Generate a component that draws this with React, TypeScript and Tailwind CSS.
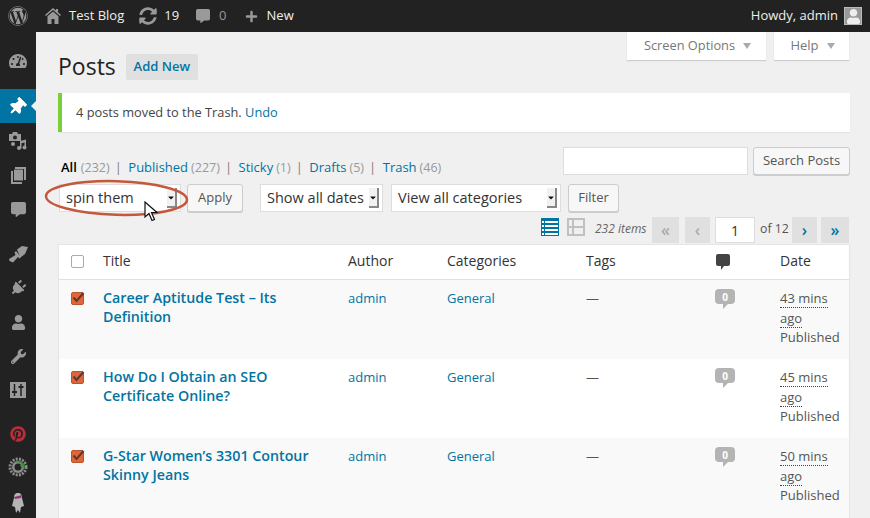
import { FaWordpress, FaSyncAlt, FaCommentAlt, FaPlus, FaTachometerAlt, FaThumbtack, FaPlug, FaUser, FaWrench, FaPinterest, FaCaretDown } from "react-icons/fa"

const posts = [
  { id: 1, title: ["Career Aptitude Test – Its", "Definition"], mins: "43 mins", bg: "bg-[#f9f9f9]" },
  { id: 2, title: ["How Do I Obtain an SEO", "Certificate Online?"], mins: "45 mins", bg: "bg-white" },
  { id: 3, title: ["G-Star Women’s 3301 Contour", "Skinny Jeans"], mins: "50 mins", bg: "bg-[#f9f9f9]" },
]

const filters = [
  { label: "Published", count: "(227)" },
  { label: "Sticky", count: "(1)" },
  { label: "Drafts", count: "(5)" },
  { label: "Trash", count: "(46)" },
]

function HomeIcon() {
  return (
    <svg width="16" height="16" viewBox="0 0 16 16" fill="#999">
      <path d="M8 0l3 2.600V1h2v3.300l3 2.700-1 1.100L8 2 1 8.100 0 7z" />
      <path d="M8 3.500l5.500 4.800V16H9.500v-5h-3v5h-4V8.300z" />
    </svg>
  )
}

function MediaIcon() {
  return (
    <svg width="20" height="20" viewBox="0 0 20 20" fill="#9a9a9a">
      <path d="M1 3h3l1-2h4l1 2h3v7H1z" />
      <circle cx="7" cy="6.500" r="2" fill="#222" />
      <path d="M12 10l6-1.500v8h-1.500v-5l-3 .8v5.200H12z" />
      <circle cx="11" cy="17" r="2" />
      <circle cx="16.500" cy="16.500" r="2" />
      <circle cx="5" cy="13" r="2" />
    </svg>
  )
}

function PagesIcon() {
  return (
    <svg width="15" height="17" viewBox="0 0 15 17" fill="#9a9a9a">
      <path d="M4 0h11v13h-2V2H4z" />
      <path d="M3 2.500h9v11H3z" />
      <path d="M0 4h2v11h9v2H0z" />
    </svg>
  )
}

function BrushIcon() {
  return (
    <svg width="19" height="17" viewBox="0 0 19 17" fill="#9a9a9a">
      <path d="M8 3.500L13 0l6 1-3 7-4.500 3.500z" />
      <path d="M7 5l5 6-1.500 1.500L9 11l-5 5.500-3.500-1.500-.5-2L6.500 9 5.500 6.500z" />
    </svg>
  )
}

function SettingsIcon() {
  return (
    <svg width="16" height="16" viewBox="0 0 16 16">
      <rect width="16" height="16" fill="#9a9a9a" />
      <path d="M4.500 2v12M11 2v12" stroke="#222" strokeWidth="1.500" />
      <path d="M2 10h5M8.500 5h5" stroke="#222" strokeWidth="2" />
    </svg>
  )
}

function GearIcon() {
  return (
    <svg width="20" height="20" viewBox="0 0 20 20">
      <circle cx="10" cy="10" r="8" fill="none" stroke="#8c8c8c" strokeWidth="3" strokeDasharray="2 1.200" />
      <circle cx="10" cy="10" r="6" fill="#8c8c8c" />
      <circle cx="10" cy="10" r="3.500" fill="#222" />
      <path d="M7 5.500c3-2.500 7-1.500 8 2l2-.5-2 4-3.500-2.500 2-.5c-1-2-4-3-6.500-2.500z" fill="#2f9e2f" />
    </svg>
  )
}

function NinjaIcon() {
  return (
    <svg width="16" height="22" viewBox="0 0 16 22">
      <path d="M8 1c3 0 4 2 4 5l2 8-3 1-1 6-2-3-2 3-1-6-3-1 2-8c0-3 1-5 4-5z" fill="#b5b5b5" />
      <path d="M4 5l8-2-1 3-6 1z" fill="#8a3a6a" />
    </svg>
  )
}

function SelectBox({ label, width }: { label: string; width: string }) {
  return (
    <div className={`${width} h-[28px] bg-white border border-[#ddd] flex items-center justify-between pl-[6px] pr-[3px] text-[14.500px] text-[#333]`}>
      <span>{label}</span>
      <span className="w-[10px] h-[20px] flex items-center justify-center bg-[#f1f1f1] border-r-2 border-b-2 border-[#888]">
        <FaCaretDown size={9} color="#111" />
      </span>
    </div>
  )
}

function Button({ label, width }: { label: string; width: string }) {
  return (
    <div className={`${width} h-[28px] bg-[#f7f7f7] border border-[#ccc] rounded-[3px] shadow-[0_1px_0_#ccc] flex items-center justify-center text-[13px] text-[#555]`}>
      {label}
    </div>
  )
}

function PageButton({ label, dim, width }: { label: string; dim?: boolean; width: string }) {
  return (
    <div className={`${width} h-[26px] bg-[#e0e0e0] flex items-center justify-center text-[16px] font-semibold ${dim ? "text-[#aaa]" : "text-[#0074a2]"}`}>
      {label}
    </div>
  )
}

export default function App() {
  return (
    <div className="w-[870px] h-[518px] overflow-hidden flex flex-col bg-[#f0f0f0] text-[13px] text-[#444] font-['Open_Sans',sans-serif]">
      {/* ADMIN BAR */}
      <div className="h-[32px] shrink-0 bg-[#222] flex items-center text-[13px] text-[#eee]">
        <div className="w-[36px] flex justify-center text-[#999]">
          <FaWordpress size={20} />
        </div>
        <div className="ml-[9px] flex items-center gap-[8px]">
          <HomeIcon />
          <span>Test Blog</span>
        </div>
        <div className="ml-[15px] flex items-center gap-[7px]">
          <FaSyncAlt size={18} color="#999" />
          <span>19</span>
        </div>
        <div className="ml-[17px] flex items-center gap-[9px]">
          <FaCommentAlt size={14} color="#999" />
          <span className="text-[#999]">0</span>
        </div>
        <div className="ml-[18px] flex items-center gap-[9px]">
          <FaPlus size={13} color="#999" />
          <span>New</span>
        </div>
        <div className="ml-auto mr-[8px] flex items-center gap-[6px]">
          <span>Howdy, admin</span>
          <div className="w-[18px] h-[18px] bg-[#999] border border-[#bbb] flex items-end justify-center overflow-hidden">
            <FaUser size={15} color="#eee" />
          </div>
        </div>
      </div>

      <div className="flex flex-1 min-h-0">
        {/* SIDEBAR */}
        <div className="w-[36px] shrink-0 bg-[#222] flex flex-col items-center text-[#999]">
          <div className="h-[57px] shrink-0 w-full flex items-center justify-center">
            <FaTachometerAlt size={18} />
          </div>
          <div className="h-[34px] shrink-0 w-full bg-[#0074a2] flex items-center justify-center text-white relative pt-[2px] pr-[2px]">
            <FaThumbtack size={18} className="rotate-45" />
            <span className="absolute right-0 top-[12px] border-y-[5px] border-y-transparent border-r-[5px] border-r-[#f0f0f0]" />
          </div>
          <div className="h-[34px] shrink-0 w-full pt-[2px] flex items-center justify-center"><MediaIcon /></div>
          <div className="h-[34px] shrink-0 w-full pt-[2px] flex items-center justify-center"><PagesIcon /></div>
          <div className="h-[34px] shrink-0 w-full pt-[2px] flex items-center justify-center"><FaCommentAlt size={15} /></div>
          <div className="h-[34px] shrink-0 mt-[12px] w-full flex items-center justify-center"><BrushIcon /></div>
          <div className="h-[34px] shrink-0 w-full flex items-center justify-center"><FaPlug size={16} className="rotate-45" /></div>
          <div className="h-[34px] shrink-0 w-full flex items-center justify-center"><FaUser size={15} /></div>
          <div className="h-[34px] shrink-0 w-full flex items-center justify-center"><FaWrench size={15} /></div>
          <div className="h-[34px] shrink-0 w-full flex items-center justify-center"><SettingsIcon /></div>
          <div className="h-[34px] shrink-0 mt-[10px] w-full flex items-center justify-center text-[#b5303a]"><FaPinterest size={16} /></div>
          <div className="h-[32px] shrink-0 w-full flex items-center justify-center"><GearIcon /></div>
          <div className="h-[40px] shrink-0 w-full flex items-center justify-center"><NinjaIcon /></div>
        </div>

        {/* CONTENT */}
        <div className="flex-1 min-w-0 pl-[22px] pr-[20px] relative">
          {/* tabs */}
          <div className="flex justify-end gap-[8px] pr-[1px] h-[28px] text-[#777]">
            <div className="w-[139px] h-[28px] pl-[2px] bg-white shadow-[0_1px_1px_rgba(0,0,0,0.15)] flex items-center justify-center gap-[8px] text-[12.800px]">
              Screen Options <span className="border-x-[4px] border-x-transparent border-t-[6px] border-t-[#aaa]" />
            </div>
            <div className="w-[75px] h-[28px] pl-[2px] bg-white shadow-[0_1px_1px_rgba(0,0,0,0.15)] flex items-center justify-center gap-[8px]">
              Help <span className="border-x-[4px] border-x-transparent border-t-[6px] border-t-[#aaa]" />
            </div>
          </div>

          {/* title */}
          <div className="-mt-[6px] h-[26px] flex items-center">
            <h1 className="text-[23px] text-[#222] leading-[26px] -mt-[2px]">Posts</h1>
            <div className="ml-[10px] w-[72px] h-[26px] bg-[#e0e0e0] rounded-[2px] flex items-center justify-center text-[13px] font-semibold text-[#0074a2]">
              Add New
            </div>
          </div>

          {/* notice */}
          <div className="mt-[13px] h-[39px] bg-white border-l-4 border-[#7ad03a] shadow-[0_1px_1px_rgba(0,0,0,0.05)] flex items-center pl-[14px] text-[12.800px]">
            4 posts moved to the Trash.&nbsp;<span className="text-[#0074a2]">Undo</span>
          </div>

          {/* filters + search */}
          <div className="mt-[15px] h-[28px] flex items-start justify-between">
            <div className="flex items-center h-[18px] mt-[12px] pl-[3px]">
              <span className="font-semibold text-[#000]">All</span>
              <span className="ml-[4px] text-[#999] text-[12.500px]">(232)</span>
              {filters.map((f) => (
                <span key={f.label} className="flex items-center">
                  <span className="ml-[5px] mr-[6.500px] text-[#8a7a75]">|</span>
                  <span className="text-[#0074a2]">{f.label}</span>
                  <span className="ml-[3px] text-[#999] text-[12.500px]">{f.count}</span>
                </span>
              ))}
            </div>
            <div className="flex gap-[5px]">
              <div className="w-[185px] h-[28px] bg-white border border-[#ddd]" />
              <Button label="Search Posts" width="w-[97px]" />
            </div>
          </div>

          {/* bulk actions row */}
          <div className="mt-[9px] flex items-start">
            <div className="ml-[1px]"><SelectBox label="spin them" width="w-[122px]" /></div>
            <div className="ml-[6px]"><Button label="Apply" width="w-[56px]" /></div>
            <div className="ml-[17px]"><SelectBox label="Show all dates" width="w-[123px]" /></div>
            <div className="ml-[8px]"><SelectBox label="View all categories" width="w-[170px]" /></div>
            <div className="ml-[7px]"><Button label="Filter" width="w-[51px]" /></div>
          </div>

          {/* pagination row */}
          <div className="mt-[5px] h-[28px] flex items-start justify-end pr-[1px]">
            <svg width="18" height="18" viewBox="0 0 18 18" className="mt-[1px]">
              <rect width="18" height="18" fill="#0074a2" />
              <path d="M1 3h2v2H1zM1 7h2v2H1zM1 11h2v2H1zM1 15h2v2H1z" fill="#fff" />
              <path d="M4 3h13v2H4zM4 7h13v2H4zM4 11h13v2H4zM4 15h13v2H4z" fill="#fff" />
            </svg>
            <svg width="18" height="18" viewBox="0 0 18 18" className="mt-[1px] ml-[8px]">
              <rect width="18" height="18" fill="#c0c0c0" />
              <path d="M2 2h3v6H2zM2 10h3v6H2zM7 2h9v6H7zM7 10h9v6H7z" fill="#f0f0f0" />
            </svg>
            <span className="ml-[10px] w-[52px] mt-[3px] italic text-[12px] text-[#666] whitespace-nowrap">232 items</span>
            <div className="ml-[5px]"><PageButton label="«" dim width="w-[27px]" /></div>
            <div className="ml-[6px]"><PageButton label="‹" dim width="w-[25px]" /></div>
            <div className="ml-[5px] w-[40px] h-[26px] bg-white border border-[#ddd] flex items-center justify-center text-[14px] text-[#333]">1</div>
            <span className="ml-[5px] w-[27px] mt-[3px] whitespace-nowrap text-[12.300px] text-[#555]">of 12</span>
            <div className="ml-[5px]"><PageButton label="›" width="w-[25px]" /></div>
            <div className="ml-[4px]"><PageButton label="»" width="w-[28px]" /></div>
          </div>

          {/* table */}
          <div className="-mt-[1px] bg-white border border-[#e5e5e5] shadow-[0_1px_1px_rgba(0,0,0,0.04)]">
            <div className="h-[35px] pb-[3px] flex items-center border-b border-[#e1e1e1] text-[14px] text-[#333]">
              <div className="w-[34px] shrink-0 pl-[12px] pt-[1px]">
                <div className="w-[13px] h-[13px] bg-white border border-[#aaa] rounded-[2px]" />
              </div>
              <div className="w-[245px] shrink-0 pl-[10px]">Title</div>
              <div className="w-[99px] shrink-0 pl-[10px]">Author</div>
              <div className="w-[139px] shrink-0 pl-[10px]">Categories</div>
              <div className="w-[124px] shrink-0 pl-[10px]">Tags</div>
              <div className="w-[70px] shrink-0 pl-[16px] pt-[3px]">
                <svg width="14" height="16" viewBox="0 0 14 16">
                  <path d="M2 0h10a2 2 0 0 1 2 2v8a2 2 0 0 1-2 2H8l-3 4v-4H2a2 2 0 0 1-2-2V2a2 2 0 0 1 2-2z" fill="#444" />
                </svg>
              </div>
              <div className="pl-[10px]">Date</div>
            </div>
            {posts.map((p) => (
              <div key={p.id} className={`h-[79px] last:h-[90px] flex items-start pt-[9px] leading-[19.500px] ${p.bg}`}>
                <div className="w-[34px] shrink-0 pl-[12px] pt-[3px]">
                  <div className="w-[13px] h-[13px] bg-[#e0663a] border border-[#b9542f] rounded-[2px] flex items-center justify-center">
                    <svg width="13" height="13" viewBox="0 0 13 13" className="overflow-visible">
                      <path d="M2.500 5.500l3 3.500 7-8" fill="none" stroke="#5a3a30" strokeWidth="2" />
                    </svg>
                  </div>
                </div>
                <div className="w-[245px] shrink-0 pl-[10px] -mt-[1px] leading-[19px] text-[14.250px] font-semibold text-[#0074a2]">
                  {p.title[0]}<br />{p.title[1]}
                </div>
                <div className="w-[99px] shrink-0 pl-[10px] text-[#0074a2]">admin</div>
                <div className="w-[139px] shrink-0 pl-[10px] text-[#0074a2]">General</div>
                <div className="w-[124px] shrink-0 pl-[10px] text-[#555]">—</div>
                <div className="w-[70px] shrink-0 pl-[15px] text-[#fff]">
                  <div className="w-[20px] h-[15px] bg-[#b4b4b4] rounded-[4px] flex items-center justify-center text-[10px] font-bold leading-none">0</div>
                  <div className="ml-[8px] w-0 h-0 border-t-[5px] border-t-[#b4b4b4] border-r-[5px] border-r-transparent" />
                </div>
                <div className="pl-[10px] text-[#555] whitespace-nowrap">
                  <span className="border-b border-dotted border-[#444]">{p.mins}</span><br />
                  <span className="border-b border-dotted border-[#444]">ago</span><br />
                  Published
                </div>
              </div>
            ))}
          </div>

          {/* annotation over the bulk select */}
          <svg width="145" height="40" viewBox="0 0 145 40" className="absolute left-[8px] top-[147px] pointer-events-none">
            <ellipse cx="72.500" cy="19" rx="70.500" ry="16.800" fill="none" stroke="#c5573a" strokeWidth="2.500" transform="rotate(1.500 72.500 19)" />
          </svg>
          <svg width="14" height="21" viewBox="0 0 14 21" className="absolute left-[108px] top-[169px] pointer-events-none">
            <path d="M1 1v15l4-3.500 3 7 2.500-1-3-7h5.500z" fill="#fff" stroke="#111" strokeWidth="1.200" />
          </svg>
        </div>
      </div>
    </div>
  )
}
